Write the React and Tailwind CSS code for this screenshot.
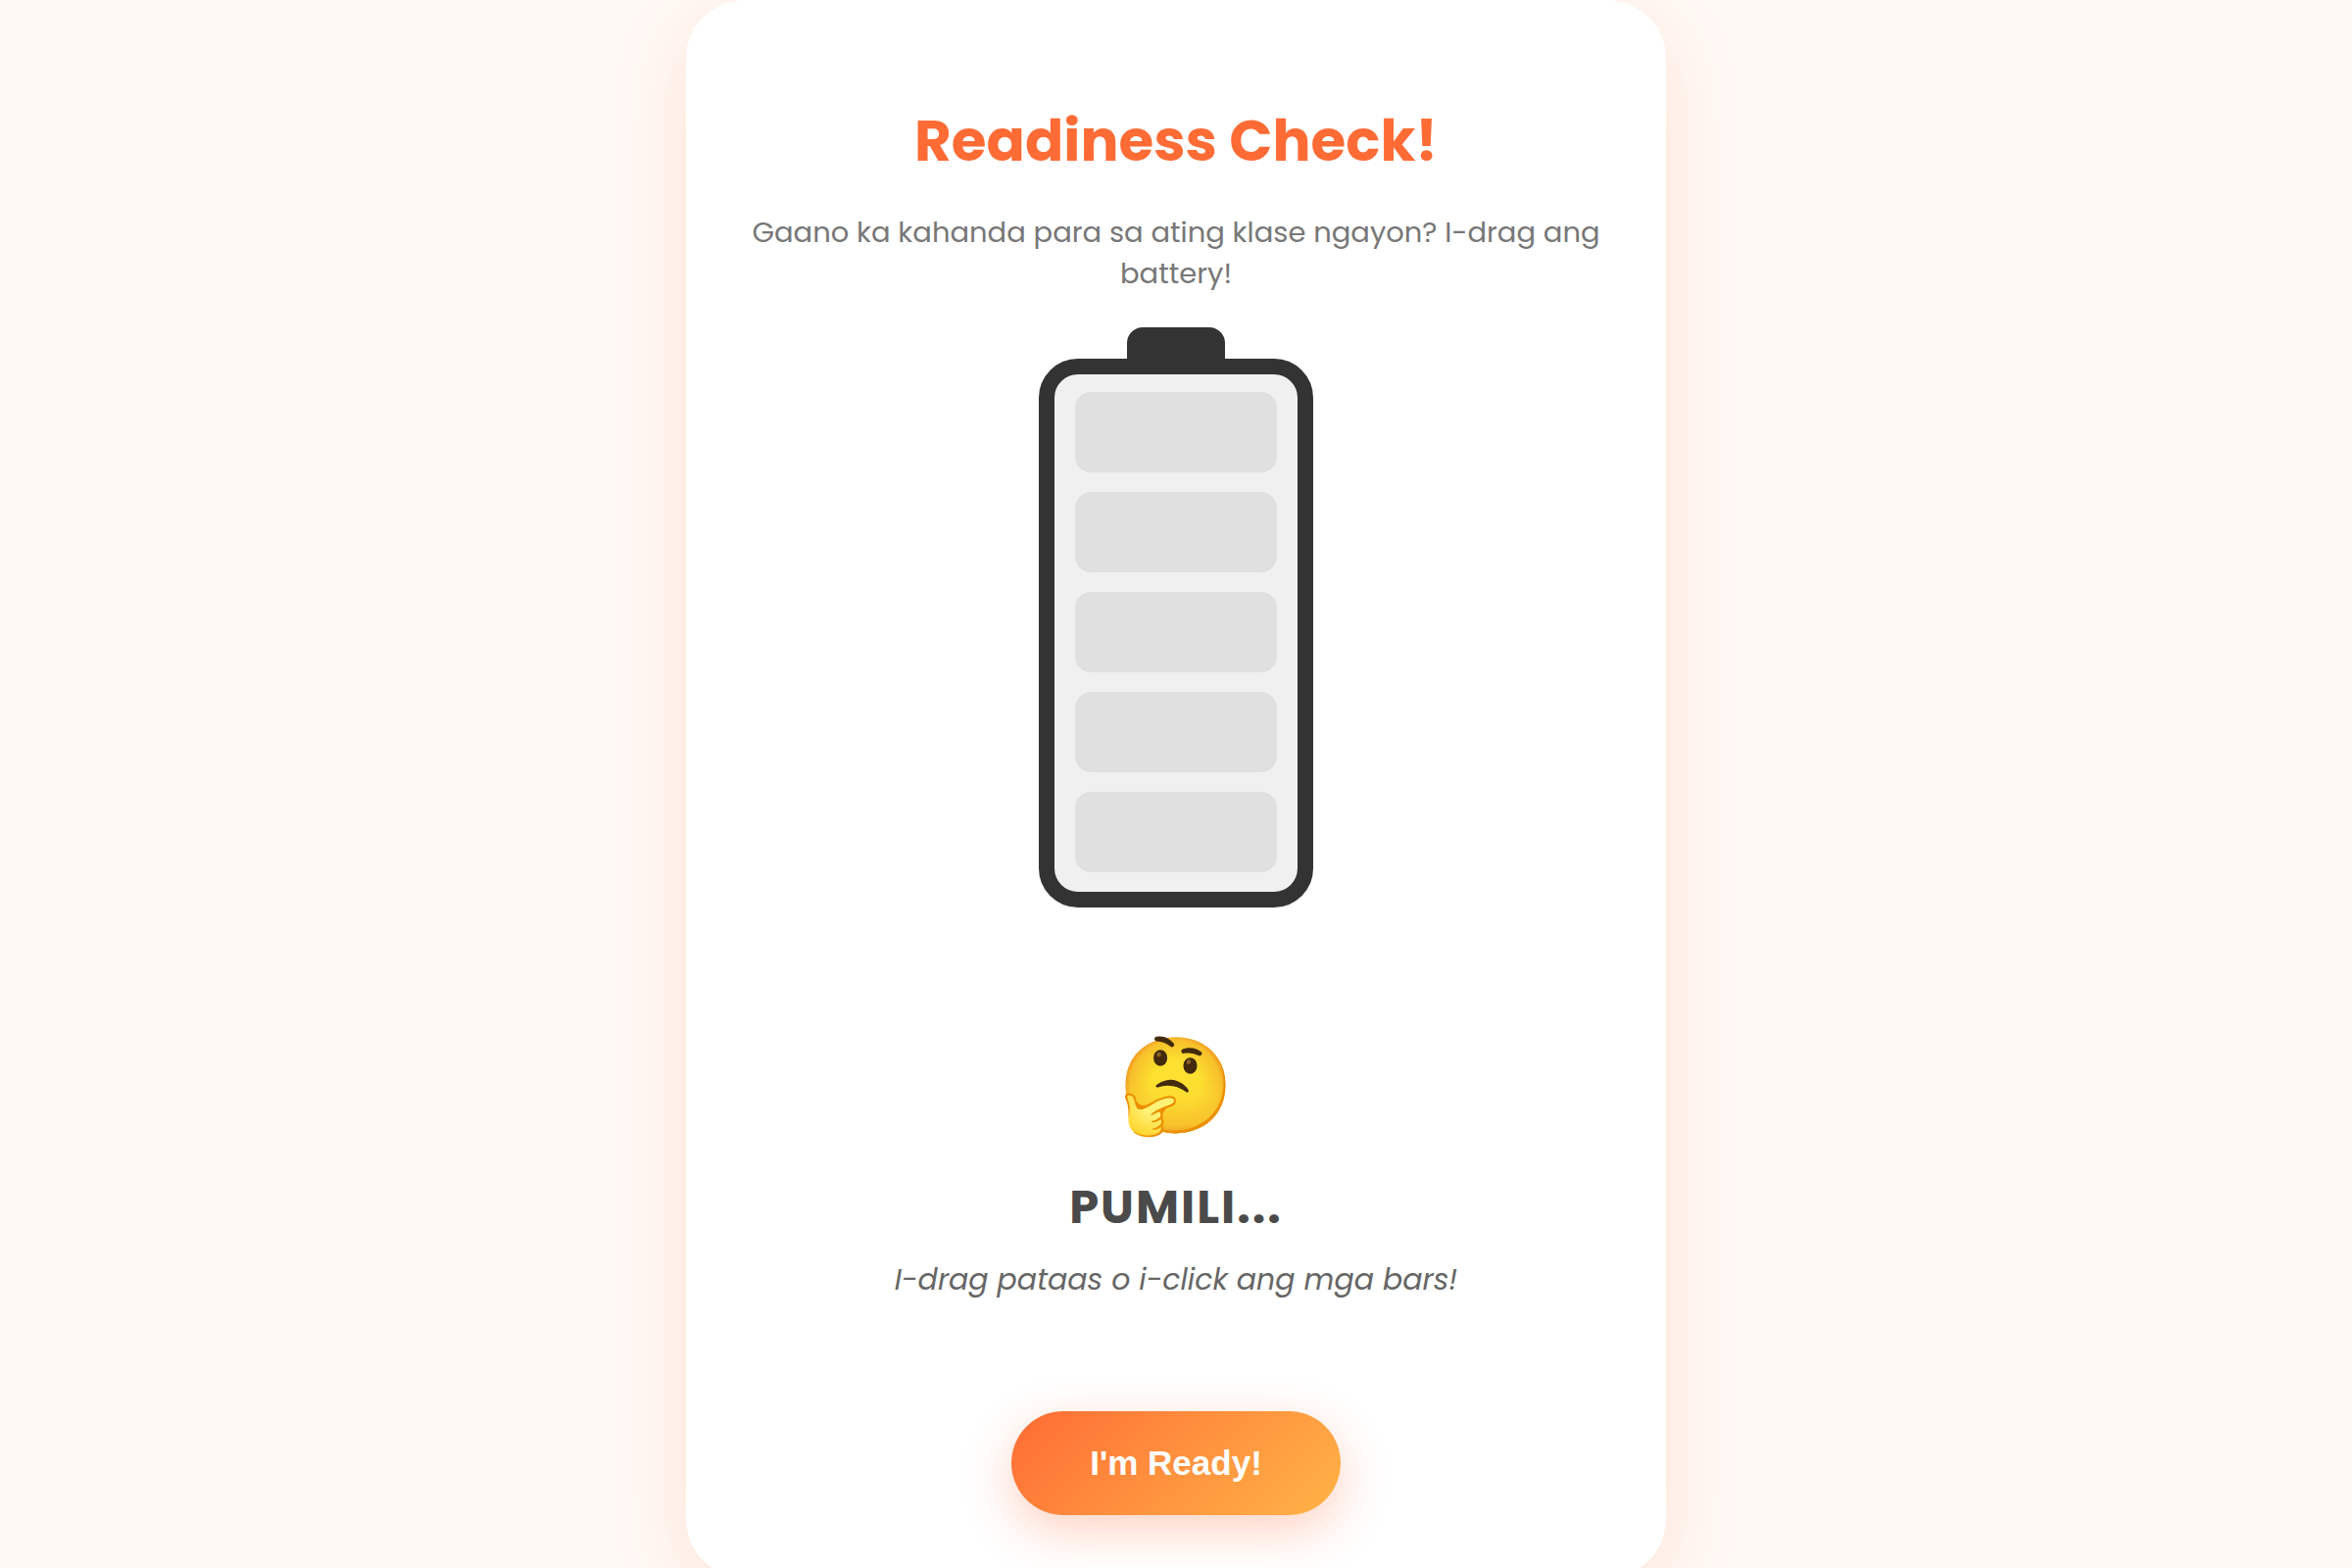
import { useState } from "react";

const LEVELS = [
  { emoji: "🤔", title: "PUMILI...", note: "I-drag pataas o i-click ang mga bars!", fill: "" },
  { emoji: "😴", title: "LOW BATT", note: "Kailangan ko pa ng pahinga.", fill: "bg-red-500" },
  { emoji: "😐", title: "MEDYO", note: "Unti-unti nang gumigising.", fill: "bg-orange-400" },
  { emoji: "🙂", title: "SAKTO", note: "Kaya ko ito!", fill: "bg-yellow-400" },
  { emoji: "😄", title: "HANDA", note: "Handa na akong matuto!", fill: "bg-lime-500" },
  { emoji: "🤩", title: "FULL CHARGE", note: "Simulan na natin!", fill: "bg-green-500" },
];

function Battery({ level, onPick }) {
  return (
    <div className="flex flex-col items-center">
      <div className="h-8 w-[100px] rounded-t-2xl bg-[#333333]" />
      <div className="flex h-[560px] w-[280px] flex-col gap-5 rounded-[40px] border-16 border-[#333333] bg-[#f0f0f0] px-[21px] pt-[18px] pb-5">
        {[5, 4, 3, 2, 1].map((n) => (
          <button
            key={n}
            type="button"
            aria-label={"Level " + n}
            onClick={() => onPick(n)}
            className={"w-full flex-1 rounded-2xl " + (n <= level ? LEVELS[level].fill : "bg-[#e0e0e0]")}
          />
        ))}
      </div>
    </div>
  );
}

export default function App() {
  const [level, setLevel] = useState(0);
  const state = LEVELS[level];
  return (
    <div className="flex min-h-screen flex-col items-center bg-[#fff9f5] font-['Poppins','Open_Sans',sans-serif]">
      <main className="flex w-full max-w-[1000px] flex-col items-center rounded-[60px] bg-white px-15 pt-25 pb-16 text-center shadow-[0_20px_80px_rgba(255,107,53,0.15)]">
        <h1 className="text-[58px] leading-[88px] font-bold text-[#ff6b35]">Readiness Check!</h1>
        <p className="mt-7 text-[29px] leading-[42px] text-[#777777]">
          Gaano ka kahanda para sa ating klase ngayon? I-drag ang battery!
        </p>
        <div className="mt-[34px]">
          <Battery level={level} onPick={setLevel} />
        </div>
        <div className="mt-[118px] text-[96px] leading-[128px]">{state.emoji}</div>
        <h2 className="mt-6 text-[48px] leading-[72px] font-bold tracking-[2px] text-[#4a4a4a]">{state.title}</h2>
        <p className="mt-[14px] text-[30px] leading-[48px] text-[#666666] italic">{state.note}</p>
        <button
          type="button"
          className="mt-[110px] rounded-full bg-linear-135 from-[#ff6b35] to-[#ffb347] px-20 py-8 font-['Liberation_Sans',Arial,sans-serif] text-[35px] leading-[42px] font-bold text-white shadow-[0_16px_50px_rgba(255,107,53,0.3)]"
        >
          I'm Ready!
        </button>
      </main>
    </div>
  );
}
